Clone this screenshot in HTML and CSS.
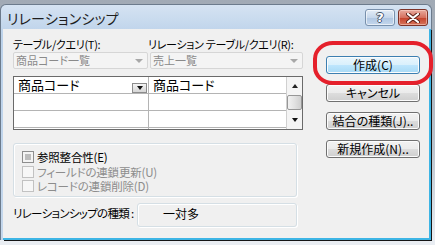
FILE: index.html
```html
<!DOCTYPE html>
<html lang="ja">
<head>
    <meta charset="UTF-8">
    <title>リレーションシップ</title>
    <link rel="stylesheet" href="styles.css">
</head>
<body>
<div class="screen">
    <div class="window">
        <div class="titlebar">
            <span class="title">リレーションシップ</span>
            <div class="caption-btns">
                <span class="cap help">?</span>
                <span class="cap close">
                    <svg width="14" height="10" viewBox="0 0 14 10">
                        <path d="M2 1 L12 9 M12 1 L2 9" stroke="#5a2018" stroke-width="4" stroke-linecap="round"/>
                        <path d="M2 1 L12 9 M12 1 L2 9" stroke="#fff" stroke-width="2.2" stroke-linecap="round"/>
                    </svg>
                </span>
            </div>
        </div>

        <div class="client">
            <div class="left">
                <div class="labels">
                    <span class="lbl first">テーブル/クエリ(T):</span>
                    <span class="lbl">リレーション テーブル/クエリ(R):</span>
                </div>
                <div class="combos">
                    <div class="combo c1"><span>商品コード一覧</span><i class="tri gray"></i></div>
                    <div class="combo c2"><span>売上一覧</span><i class="tri gray"></i></div>
                </div>

                <div class="grid">
                    <div class="rows">
                        <div class="row">
                            <div class="cell col1">商品コード<span class="drop"><i class="tri"></i></span></div>
                            <div class="cell col2">商品コード</div>
                        </div>
                        <div class="row">
                            <div class="cell col1"></div>
                            <div class="cell col2"></div>
                        </div>
                        <div class="row">
                            <div class="cell col1"></div>
                            <div class="cell col2"></div>
                        </div>
                        <div class="row part">
                            <div class="cell col1"></div>
                            <div class="cell col2"></div>
                        </div>
                    </div>
                    <div class="scroll">
                        <div class="sb-btn"><i class="tri up"></i></div>
                        <div class="thumb"></div>
                        <div class="sb-btn down"><i class="tri"></i></div>
                    </div>
                </div>

                <div class="group">
                    <div class="check"><span class="box on"></span>参照整合性(E)</div>
                    <div class="check off"><span class="box"></span>フィールドの連鎖更新(U)</div>
                    <div class="check off"><span class="box"></span>レコードの連鎖削除(D)</div>
                </div>

                <div class="kind">
                    <span class="kind-label">リレーションシップの種類 :</span>
                    <div class="kind-box">一対多</div>
                </div>
            </div>

            <div class="buttons">
                <button class="btn default">作成(C)</button>
                <button class="btn">キャンセル</button>
                <button class="btn">結合の種類(J)..</button>
                <button class="btn">新規作成(N)..</button>
            </div>
        </div>
    </div>

    <!-- red marker round the create button -->
    <div class="marker"></div>
</div>
</body>
</html>
```

FILE: styles.css
```css
* {
    box-sizing: border-box;
}

body {
    margin: 0;
    width: 435px;
    height: 245px;
    overflow: hidden;
    font-family: "Noto Sans CJK JP", "Noto Sans", sans-serif;
    font-size: 12px;
    color: #000;
    font-feature-settings: "palt";
}

.screen {
    position: relative;
    height: 245px;
    background: linear-gradient(#a1aab5, #b9c3cd 60%, #e9edf2 97%);
}

.window {
    position: absolute;
    top: 4px;
    left: 0;
    width: 432px;
    height: 236px;
    display: flex;
    flex-direction: column;
    border: 1px solid #6c7b8c;
    border-bottom: none;
    border-radius: 6px 6px 0 0;
    background: linear-gradient(#d5e3f2, #bcd2ea 30px, #c4d7ec);
}

.titlebar {
    height: 24px;
    display: flex;
    justify-content: space-between;
    align-items: flex-start;
}

.title {
    font-size: 14px;
    line-height: 16px;
    margin: 5px 0 0 6px;
    color: #1e1e1e;
    letter-spacing: 0.2px;
}

.caption-btns {
    display: flex;
    gap: 3px;
    margin: 4px 3px 0 0;
}

.cap {
    width: 30px;
    height: 17px;
    border-radius: 3px;
    display: flex;
    align-items: center;
    justify-content: center;
}

.help {
    border: 1px solid #7890ac;
    background: linear-gradient(#e4edf7, #c6d7eb 50%, #afc6e1 51%, #c3d6ec);
    box-shadow: inset 0 0 0 1px rgba(255, 255, 255, 0.6);
    color: #fff;
    font-family: "DejaVu Sans", sans-serif;
    font-weight: bold;
    font-size: 13px;
    text-shadow: 1px 0 0 #44546a, -1px 0 0 #44546a, 0 1px 0 #44546a, 0 -1px 0 #44546a;
}

.close {
    border: 1px solid #7d3328;
    background: linear-gradient(#e8aa9e, #d6705e 50%, #c4402a 51%, #d6755c);
    box-shadow: inset 0 0 0 1px rgba(255, 220, 210, 0.5);
}

.client {
    flex: 1;
    margin-left: 2px;
    display: flex;
    gap: 23px;
    padding: 8px 0 0 10px;
    background: #f0f0f0;
    border-right: 2px solid #3db5e5;
    border-bottom: 2px solid #3db5e5;
    box-shadow: 1px 1px 0 #151515;
}

.left {
    width: 290px;
    display: flex;
    flex-direction: column;
}

.labels {
    display: flex;
    height: 14px;
    line-height: 14px;
    font-size: 11px;
    letter-spacing: -0.3px;
}

.lbl.first {
    width: 135px;
}

.combos {
    display: flex;
    gap: 2px;
    margin-top: 1px;
}

.combo {
    height: 17px;
    border: 1px solid #d6d6d6;
    border-radius: 2px;
    background: #f4f4f4;
    color: #8a8a8a;
    font-size: 11px;
    line-height: 15px;
    padding-left: 2px;
    display: flex;
    justify-content: space-between;
    align-items: center;
}

.c1 {
    width: 135px;
}

.c2 {
    width: 153px;
}

.tri {
    width: 0;
    height: 0;
    border-left: 4px solid transparent;
    border-right: 4px solid transparent;
    border-top: 4px solid #111;
}

.tri.gray {
    border-top-color: #a8a8a8;
    margin-right: 4px;
}

.tri.up {
    border-top: none;
    border-bottom: 4px solid #222;
}

.grid {
    margin-top: 7px;
    height: 54px;
    display: flex;
    border: 1px solid #6a6a6a;
    background: #fff;
    overflow: hidden;
}

.rows {
    flex: 1;
}

.row {
    display: flex;
    height: 17px;
    border-bottom: 1px solid #b4b4b4;
}

.cell {
    font-size: 13px;
    line-height: 16px;
    padding-left: 4px;
}

.col1 {
    width: 135px;
    border-right: 1px solid #b4b4b4;
    position: relative;
}

.drop {
    position: absolute;
    right: 1px;
    bottom: 0;
    width: 15px;
    height: 10px;
    border: 1px solid #8c8c8c;
    background: linear-gradient(#f4f4f4, #d6d6d6);
    display: flex;
    align-items: center;
    justify-content: center;
}

.drop .tri {
    border-width: 4px 3px 0 3px;
}

.scroll {
    width: 16px;
    border-left: 1px solid #d0d0d0;
    background: #f4f4f4;
    display: flex;
    flex-direction: column;
    align-items: center;
}

.sb-btn {
    height: 17px;
    width: 100%;
    display: flex;
    align-items: center;
    justify-content: center;
}

.sb-btn .tri {
    border-width: 0 3px 4px 3px;
}

.sb-btn.down {
    height: 16px;
}

.sb-btn.down .tri {
    border-width: 4px 3px 0 3px;
}

.thumb {
    width: 15px;
    height: 15px;
    margin: 1px 0 2px;
    border: 1px solid #979797;
    border-radius: 2px;
    background: linear-gradient(90deg, #f2f2f2, #e2e2e2 50%, #cfcfcf);
}

.group {
    margin-top: 13px;
    width: 284px;
    height: 54px;
    border: 1px solid #d5dfe5;
    border-radius: 3px;
    box-shadow: inset 1px 1px 0 #fff, 1px 1px 0 #fff;
    padding: 6px 0 0 8px;
}

.check {
    display: flex;
    align-items: center;
    height: 14.5px;
    font-size: 11.5px;
    line-height: 14px;
    letter-spacing: -0.2px;
}

.check.off {
    color: #8d8d8d;
}

.box {
    width: 12px;
    height: 12px;
    margin-right: 3px;
    border: 1px solid #c2c2c2;
    background: #f7f7f7;
}

.box.on {
    border-color: #8e8e8e;
    background: #f4f4f4;
    box-shadow: inset 0 0 0 2px #f4f4f4, inset 0 0 0 6px #bdbdbd;
}

.kind {
    margin-top: 6px;
    display: flex;
    align-items: flex-start;
}

.kind-label {
    width: 124px;
    padding-top: 2px;
    font-size: 11.5px;
    letter-spacing: -0.7px;
    white-space: nowrap;
}

.kind-box {
    width: 160px;
    height: 24px;
    border: 1px solid #d5dfe5;
    border-radius: 3px;
    box-shadow: inset 1px 1px 0 #fff, 1px 1px 0 #fff;
    padding-left: 25px;
    line-height: 20px;
    font-size: 12px;
}

.buttons {
    margin-top: 19px;
    display: flex;
    flex-direction: column;
    gap: 10px;
}

.btn {
    width: 94px;
    height: 18px;
    padding: 0;
    font-family: inherit;
    font-size: 12px;
    line-height: 14px;
    color: #000;
    border: 1px solid #707070;
    border-radius: 3px;
    background: linear-gradient(#f2f2f2, #ebebeb 50%, #dddddd 51%, #cfcfcf);
    box-shadow: inset 0 0 0 1px #fcfcfc;
    font-feature-settings: "palt";
}

.btn.default {
    border-color: #3c7fb1;
    background: linear-gradient(#eaf6fd, #d9f0fc 50%, #bee6fd 51%, #a7d9f5);
}

.marker {
    position: absolute;
    left: 313px;
    top: 41px;
    width: 120px;
    height: 44px;
    border: 4px solid #e5202b;
    border-radius: 20px / 18px;
}
```
